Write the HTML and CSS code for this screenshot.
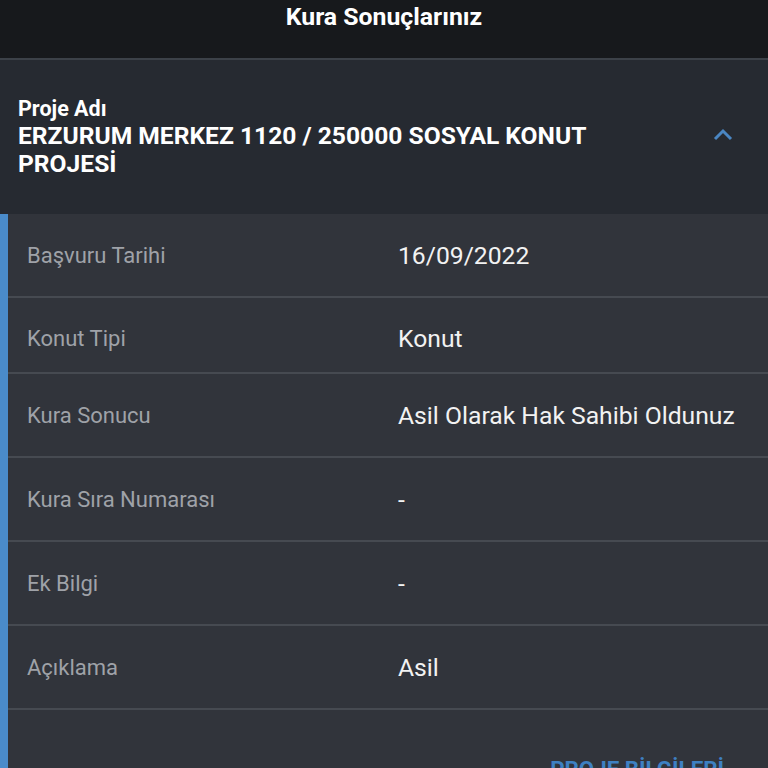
FILE: index.html
```html
<!DOCTYPE html>
<html lang="tr">
<head>
    <meta charset="UTF-8">
    <meta name="viewport" content="width=device-width, initial-scale=1.0">
    <title>Kura Sonuçlarınız</title>
    <link rel="stylesheet" href="styles.css">
</head>
<body>
    <!-- Top bar -->
    <div class="tb">
        <h1>Kura Sonuçlarınız</h1>
    </div>

    <!-- Project accordion -->
    <div class="acc">
        <div class="ah">
            <div class="at">
                <div class="al">Proje Adı</div>
                <div class="an">ERZURUM MERKEZ 1120 / 250000 SOSYAL KONUT PROJESİ</div>
            </div>
            <svg class="chev" width="22" height="14" viewBox="0 0 22 14">
                <path d="M3 11 L11 3 L19 11" fill="none" stroke="#4a86c2" stroke-width="3"/>
            </svg>
        </div>

        <div class="ab">
            <div class="row">
                <div class="lb">Başvuru Tarihi</div>
                <div class="vl">16/09/2022</div>
            </div>
            <div class="row sh">
                <div class="lb">Konut Tipi</div>
                <div class="vl">Konut</div>
            </div>
            <div class="row">
                <div class="lb">Kura Sonucu</div>
                <div class="vl">Asil Olarak Hak Sahibi Oldunuz</div>
            </div>
            <div class="row">
                <div class="lb">Kura Sıra Numarası</div>
                <div class="vl">-</div>
            </div>
            <div class="row">
                <div class="lb">Ek Bilgi</div>
                <div class="vl">-</div>
            </div>
            <div class="row">
                <div class="lb">Açıklama</div>
                <div class="vl">Asil</div>
            </div>
            <div class="act">
                <button class="lnk">PROJE BİLGİLERİ</button>
            </div>
        </div>
    </div>
</body>
</html>
```

FILE: styles.css
```css
body {
    font-family: Roboto, "Liberation Sans", sans-serif;
    margin: 0;
    padding: 0;
    background-color: #31343b;
    overflow: hidden;
}
.tb {
    height: 58px;
    background-color: #17191c;
    border-bottom: 2px solid #3c4148;
}
.tb h1 {
    margin: 0;
    padding-top: 2px;
    text-align: center;
    color: #fff;
    font-size: 24.8px;
    font-weight: 700;
    line-height: 30px;
}
.acc {
    background-color: #31343b;
}
.ah {
    height: 154px;
    display: flex;
    align-items: center;
    padding: 0 34px 0 18px;
    background-color: #262a31;
    color: #fff;
}
.at {
    flex: 1;
    padding-right: 110px;
}
.al {
    font-size: 21.5px;
    font-weight: 700;
    line-height: 26px;
}
.an {
    font-size: 24.6px;
    font-weight: 700;
    line-height: 28px;
}
.chev {
    margin-top: -4px;
}
.ab {
    border-left: 8px solid #4a8bca;
}
.row {
    height: 82px;
    display: grid;
    grid-template-columns: 371px 1fr;
    align-items: center;
    padding-left: 19px;
    border-bottom: 2px solid #464a51;
}
.row.sh {
    height: 68px;
    padding-top: 6px;
}
.lb {
    font-size: 22px;
    color: #9fa2a8;
}
.vl {
    font-size: 24.7px;
    color: #f2f2f2;
}
.act {
    height: 120px;
    display: flex;
    justify-content: flex-end;
    padding: 46px 44px 0 0;
}
.lnk {
    align-self: flex-start;
    border: none;
    background: none;
    padding: 0;
    font-family: inherit;
    font-size: 22.3px;
    font-weight: 700;
    color: #3e80c2;
    cursor: pointer;
}
```
